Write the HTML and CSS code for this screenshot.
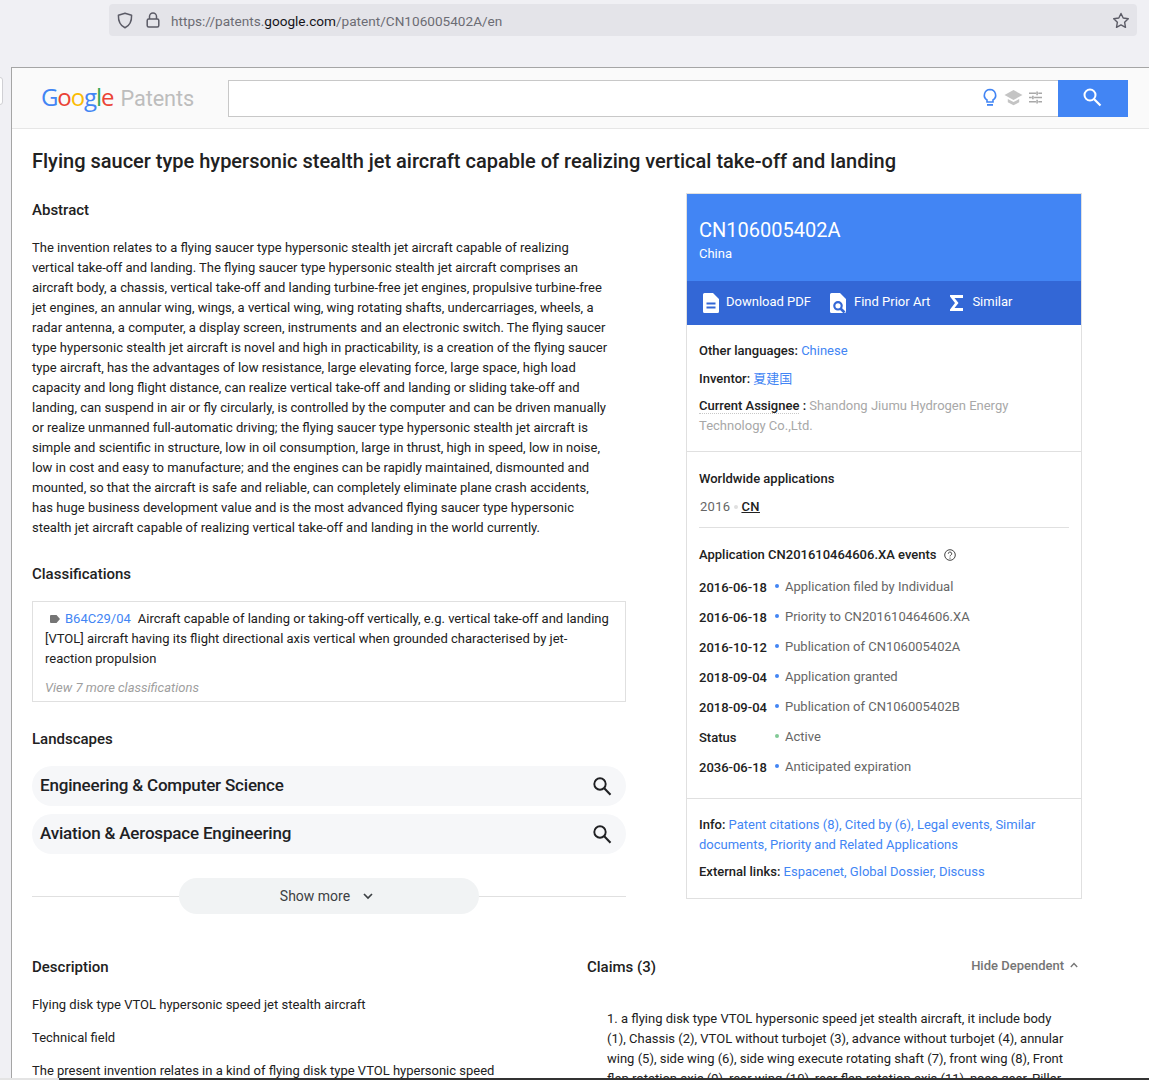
FILE: index.html
```html
<!DOCTYPE html>
<html lang="en">
<head>
<meta charset="utf-8">
<title>CN106005402A - Google Patents</title>
<link rel="stylesheet" href="styles.css">
</head>
<body>
<div class="chrome">
  <div class="urlbar">
    <svg class="ico-shield" width="16" height="17" viewBox="0 0 16 17"><path d="M8 1.200 14.600 3.200C14.800 9 13 13.400 8 15.800 3 13.400 1.200 9 1.400 3.200Z" fill="none" stroke="#5b5b66" stroke-width="1.500" stroke-linejoin="round"/></svg>
    <svg class="ico-lock" width="14" height="16" viewBox="0 0 14 16"><path d="M3.500 7V4.500a3.500 3.500 0 0 1 7 0V7" fill="none" stroke="#5b5b66" stroke-width="1.500"/><rect x="1.200" y="7" width="11.600" height="8" rx="1.500" fill="none" stroke="#5b5b66" stroke-width="1.500"/></svg>
    <span class="url">https://patents.<b>google.com</b>/patent/CN106005402A/en</span>
    <svg class="ico-star" width="18" height="17" viewBox="0 0 18 17"><path d="M9 1.500 11.200 6 16.300 6.700 12.600 10.200 13.500 15.300 9 12.900 4.500 15.300 5.400 10.200 1.700 6.700 6.800 6Z" fill="none" stroke="#5b5b66" stroke-width="1.400" stroke-linejoin="round"/></svg>
  </div>
</div>
<div class="tab-notch"></div>
<div class="frame">
  <header class="top">
    <div class="logo"><span class="g-b">G</span><span class="g-r">o</span><span class="g-y">o</span><span class="g-b">g</span><span class="g-g">l</span><span class="g-r">e</span> <span class="logo-p">Patents</span></div>
    <div class="search">
      <svg class="s-bulb" width="16" height="20" viewBox="0 0 16 20"><path d="M8 1.500a5.700 5.700 0 0 0-3 10.500v2h6v-2A5.700 5.700 0 0 0 8 1.500Z" fill="none" stroke="#4285f4" stroke-width="1.600"/><rect x="5" y="16" width="6" height="1.800" fill="#4285f4"/></svg>
      <svg class="s-cap" width="19" height="17" viewBox="0 0 19 17"><path d="M9.500 1 18.500 6 9.500 11 .5 6Z" fill="#c4c4c4"/><path d="M3.800 10v3.300l5.700 3 5.700-3V10l-5.700 3Z" fill="#c4c4c4"/></svg>
      <svg class="s-tune" width="13" height="13" viewBox="0 0 14 13"><path d="M0 2h7.500M10 2h4M0 6.500h3M5.500 6.500H14M0 11h7.500M10 11h4M8.700 0v4M4.200 4.500v4M8.700 9v4" stroke="#a8a8a8" stroke-width="1.700" fill="none"/></svg>
    </div>
    <button class="s-btn" type="button" aria-label="Search"><svg width="20" height="20" viewBox="0 0 20 20"><circle cx="8" cy="8" r="5.500" fill="none" stroke="#fff" stroke-width="2"/><path d="M12 12l6.500 6.500" stroke="#fff" stroke-width="2.200"/></svg></button>
  </header>
  <main class="page">
    <h1>Flying saucer type hypersonic stealth jet aircraft capable of realizing vertical take-off and landing</h1>
    <div class="cols">
      <section class="left">
        <h2 class="h-abs">Abstract</h2>
        <p class="abstract">The invention relates to a flying saucer type hypersonic stealth jet aircraft capable of realizing<br>vertical take-off and landing. The flying saucer type hypersonic stealth jet aircraft comprises an<br>aircraft body, a chassis, vertical take-off and landing turbine-free jet engines, propulsive turbine-free<br>jet engines, an annular wing, wings, a vertical wing, wing rotating shafts, undercarriages, wheels, a<br>radar antenna, a computer, a display screen, instruments and an electronic switch. The flying saucer<br>type hypersonic stealth jet aircraft is novel and high in practicability, is a creation of the flying saucer<br>type aircraft, has the advantages of low resistance, large elevating force, large space, high load<br>capacity and long flight distance, can realize vertical take-off and landing or sliding take-off and<br>landing, can suspend in air or fly circularly, is controlled by the computer and can be driven manually<br>or realize unmanned full-automatic driving; the flying saucer type hypersonic stealth jet aircraft is<br>simple and scientific in structure, low in oil consumption, large in thrust, high in speed, low in noise,<br>low in cost and easy to manufacture; and the engines can be rapidly maintained, dismounted and<br>mounted, so that the aircraft is safe and reliable, can completely eliminate plane crash accidents,<br>has huge business development value and is the most advanced flying saucer type hypersonic<br>stealth jet aircraft capable of realizing vertical take-off and landing in the world currently.</p>
        <h2 class="h-class">Classifications</h2>
        <div class="classbox">
          <div class="classtext"><svg class="tag" width="10" height="8" viewBox="0 0 10 8"><path d="M1 0h5.500L10 4 6.500 8H1a1 1 0 0 1-1-1V1a1 1 0 0 1 1-1Z" fill="#757575"/></svg><a class="code">B64C29/04</a>Aircraft capable of landing or taking-off vertically, e.g. vertical take-off and landing<br>[VTOL] aircraft having its flight directional axis vertical when grounded characterised by jet-<br>reaction propulsion</div>
          <div class="viewmore">View 7 more classifications</div>
        </div>
        <h2 class="h-land">Landscapes</h2>
        <div class="pill"><span>Engineering &amp; Computer Science</span><svg width="20" height="20" viewBox="0 0 20 20"><circle cx="8" cy="8" r="5.700" fill="none" stroke="#202124" stroke-width="1.900"/><path d="M12 12l6.500 6.700" stroke="#202124" stroke-width="2.100"/></svg></div>
        <div class="pill"><span>Aviation &amp; Aerospace Engineering</span><svg width="20" height="20" viewBox="0 0 20 20"><circle cx="8" cy="8" r="5.700" fill="none" stroke="#202124" stroke-width="1.900"/><path d="M12 12l6.500 6.700" stroke="#202124" stroke-width="2.100"/></svg></div>
        <div class="showrow"><div class="showmore"><span>Show more</span><svg width="10" height="7" viewBox="0 0 10 7"><path d="M1 1l4 4 4-4" fill="none" stroke="#3c4043" stroke-width="1.700"/></svg></div></div>
      </section>
      <aside class="card">
        <div class="card-head">
          <div class="pn">CN106005402A</div>
          <div class="country">China</div>
        </div>
        <div class="card-actions">
          <div class="act act1"><svg width="16" height="20" viewBox="0 0 16 20"><path d="M1.500 0H10l6 6v12.500a1.500 1.500 0 0 1-1.500 1.500h-13A1.500 1.500 0 0 1 0 18.500v-17A1.500 1.500 0 0 1 1.500 0Z" fill="#fff"/><path d="M3.500 10.500h9M3.500 14.500h9" stroke="#3367d6" stroke-width="1.800"/></svg><span>Download PDF</span></div>
          <div class="act act2"><svg width="16" height="20" viewBox="0 0 16 20"><path d="M1.500 0H10l6 6v12.500a1.500 1.500 0 0 1-1.500 1.500h-13A1.500 1.500 0 0 1 0 18.500v-17A1.500 1.500 0 0 1 1.500 0Z" fill="#fff"/><circle cx="8" cy="12.800" r="3.700" fill="none" stroke="#3367d6" stroke-width="2.200"/><path d="M10.500 15.500l4 4" stroke="#3367d6" stroke-width="2.600"/></svg><span>Find Prior Art</span></div>
          <div class="act act3"><svg width="14" height="17" viewBox="0 0 14 17"><path d="M0 0h13v3H4.500l4 5-4 5H13v3H0v-1.500L5 8 0 1.500Z" fill="#fff"/></svg><span>Similar</span></div>
        </div>
        <div class="card-sec meta">
          <div class="m1"><b>Other languages:</b> <a>Chinese</a></div>
          <div class="m2"><b>Inventor:</b> <a class="cjk">夏建国</a></div>
          <div class="m3"><b><span class="dot-u">Current Assignee</span> :</b> <span class="grey">Shandong Jiumu Hydrogen Energy Technology Co.,Ltd.</span></div>
        </div>
        <div class="card-sec apps">
          <div class="ww">Worldwide applications</div>
          <div class="wwrow"><span class="yr">2016</span><i class="bullet-g"></i><u>CN</u></div>
          <hr class="sep">
          <div class="ev-title">Application CN201610464606.XA events <svg width="12" height="12" viewBox="0 0 12 12"><circle cx="6" cy="6" r="5.300" fill="none" stroke="#444" stroke-width="1"/><path d="M4.300 4.700a1.700 1.700 0 1 1 2.500 1.500c-.6.300-.8.600-.8 1.200" fill="none" stroke="#444" stroke-width="1"/><circle cx="6" cy="9.100" r=".7" fill="#444"/></svg></div>
          <div class="ev"><b>2016-06-18</b><i class="d"></i><span>Application filed by Individual</span></div>
          <div class="ev"><b>2016-06-18</b><i class="d"></i><span>Priority to CN201610464606.XA</span></div>
          <div class="ev"><b>2016-10-12</b><i class="d"></i><span>Publication of CN106005402A</span></div>
          <div class="ev"><b>2018-09-04</b><i class="d"></i><span>Application granted</span></div>
          <div class="ev"><b>2018-09-04</b><i class="d"></i><span>Publication of CN106005402B</span></div>
          <div class="ev"><b>Status</b><i class="d dg"></i><span>Active</span></div>
          <div class="ev"><b>2036-06-18</b><i class="d"></i><span>Anticipated expiration</span></div>
        </div>
        <div class="card-sec links">
          <div class="l1"><b>Info:</b> <a>Patent citations (8),</a> <a>Cited by (6),</a> <a>Legal events,</a> <a>Similar documents,</a> <a>Priority and Related Applications</a></div>
          <div class="l2"><b>External links:</b> <a>Espacenet,</a> <a>Global Dossier,</a> <a>Discuss</a></div>
        </div>
      </aside>
    </div>
    <div class="lower">
      <section class="desc">
        <h2>Description</h2>
        <p>Flying disk type VTOL hypersonic speed jet stealth aircraft</p>
        <p>Technical field</p>
        <p>The present invention relates in a kind of flying disk type VTOL hypersonic speed</p>
      </section>
      <section class="claims">
        <div class="claims-head"><h2>Claims (3)</h2><span class="hide">Hide Dependent<svg width="8" height="6" viewBox="0 0 8 6"><path d="M.8 5 4 1.500 7.200 5" fill="none" stroke="#757575" stroke-width="1.300"/></svg></span></div>
        <p class="claim">1. a flying disk type VTOL hypersonic speed jet stealth aircraft, it include body<br>(1), Chassis (2), VTOL without turbojet (3), advance without turbojet (4), annular<br>wing (5), side wing (6), side wing execute rotating shaft (7), front wing (8), Front<br>flap rotation axis (9), rear wing (10), rear flap rotation axis (11), nose gear, Pillar</p>
      </section>
    </div>
  </main>
</div>
<div class="taskbar"></div>
</body>
</html>
```
FILE: styles.css
```css
* { box-sizing: border-box; }
html, body { margin: 0; padding: 0; height: 1080px; overflow: hidden; }
body { background: #f0f0f4; font-family: Roboto, "Liberation Sans", sans-serif; font-size: 13px; color: #212121; position: relative; }
a { color: #4285f4; text-decoration: none; }
h1, h2, p { margin: 0; }

.chrome { height: 67px; padding: 4px 12px 0 109px; }
.urlbar { height: 32px; background: #e4e4e9; border-radius: 4px; display: flex; align-items: center; padding: 0 7px 0 8px; }
.ico-shield { margin-right: 13px; }
.ico-lock { margin-right: 11px; }
.url { font-size: 13.600px; color: #6c6c74; flex: 1; padding-top: 2px; }
.url b { font-weight: 400; color: #15141a; }
.tab-notch { position: absolute; left: -6px; top: 77px; width: 9px; height: 28px; background: #fff; border: 1px solid #d0d0d4; border-radius: 3px; }

.frame { margin-left: 11px; height: 1013px; background: #fff; border-left: 1px solid #a5a5a5; border-top: 1px solid #a5a5a5; overflow: hidden; }
.top { height: 61px; background: #fafafa; border-bottom: 1px solid #e6e6e6; display: flex; align-items: flex-start; padding: 11px 0 0 29px; }
.logo { width: 187px; font-family: "Open Sans", Roboto, sans-serif; font-size: 24px; line-height: 36px; letter-spacing: -1.100px; color: #bdbdbd; }
.logo-p { font-family: Roboto, sans-serif; font-size: 21.700px; letter-spacing: -.1px; margin-left: 2px; }
.g-b { color: #4285f4; } .g-r { color: #ea4335; } .g-y { color: #fbbc05; } .g-g { color: #34a853; }
.search { width: 830px; height: 37px; margin-top: 1px; background: #fff; border: 1px solid #c8c8c8; border-right: 0; display: flex; align-items: center; justify-content: flex-end; padding: 0 16px 2px 0; }
.s-bulb { margin-right: 6px; }
.s-cap { margin-right: 6px; }
.s-btn { width: 70px; height: 37px; margin-top: 1px; border: 0; padding: 0 2px 3px 0; background: #4285f4; display: flex; align-items: center; justify-content: center; }

.page { padding: 20px 0 0 20px; }
h1 { font-size: 20px; line-height: 24px; font-weight: 500; color: #212121; }
h2 { font-size: 15px; line-height: 20px; font-weight: 500; color: #212121; }
.cols { display: flex; align-items: flex-start; margin-top: 20px; }
.left { width: 594px; margin-right: 60px; padding-top: 7px; }
.h-abs { margin-bottom: 18px; }
.abstract { line-height: 20px; color: #212121; }
.h-class { margin-top: 26px; margin-bottom: 17px; }
.classbox { border: 1px solid #e0e0e0; height: 101px; padding: 7px 12px 0; }
.classtext { line-height: 20px; }
.tag { margin: 0 5px 0 5px; }
.code { margin-right: 7px; font-weight: 400; }
.viewmore { margin-top: 9px; font-style: italic; line-height: 20px; color: #9e9e9e; }
.h-land { margin-top: 27px; margin-bottom: 17px; }
.pill { height: 40px; border-radius: 20px; background: #f6f7f9; display: flex; align-items: center; justify-content: space-between; padding: 0 14px 0 8px; margin-bottom: 8px; }
.pill span { font-size: 17px; font-weight: 500; letter-spacing: -.18px; color: #202124; margin-top: -2px; }
.showrow { position: relative; height: 36px; margin-top: 24px; display: flex; justify-content: center; background: linear-gradient(#e0e0e0, #e0e0e0) 0 18px / 100% 1px no-repeat; }
.showmore { width: 300px; height: 36px; border-radius: 18px; padding-right: 5px; background: #f1f3f4; display: flex; align-items: center; justify-content: center; gap: 13px; font-size: 14px; color: #3c4043; }

.card { width: 396px; height: 706px; border: 1px solid #e0e0e0; }
.card-head { height: 87px; background: #4285f4; color: #fff; padding: 23px 12px 0; }
.pn { font-size: 20px; line-height: 26px; color: #fff; }
.country { line-height: 20px; margin-top: 1px; }
.card-actions { height: 44px; background: #3367d6; color: #fff; display: flex; align-items: center; padding-left: 16px; }
.act { display: flex; align-items: center; }
.act span { margin-top: -4px; }
.act1 { margin-right: 19px; }
.act1 svg { margin-right: 7px; }
.act2 { margin-right: 20px; }
.act2 svg { margin-right: 8px; }
.act3 svg { margin-right: 8px; }
.card-sec { padding: 0 12px; }
.card-sec b { font-weight: 500; color: #212121; }
.meta { height: 127px; border-bottom: 1px solid #e0e0e0; padding-top: 16px; line-height: 20px; }
.m1 { margin-bottom: 7px; }
.m2 { margin-bottom: 7px; }
.cjk { font-family: "Noto Sans CJK SC", sans-serif; }
.dot-u { border-bottom: 1px dotted #c8c8c8; }
.grey { color: #a8a8a8; }
.apps { height: 347px; border-bottom: 1px solid #e0e0e0; padding-top: 17px; }
.ww { font-weight: 500; line-height: 20px; }
.wwrow { margin-top: 8px; line-height: 20px; display: flex; align-items: center; padding-left: 1px; font-weight: 500; }
.yr { font-weight: 400; color: #666; letter-spacing: .3px; }
.bullet-g { width: 4px; height: 4px; border-radius: 50%; background: #e0e0e0; margin: 0 3px 0 4px; }
.wwrow u { color: #212121; letter-spacing: .4px; }
.sep { border: 0; border-top: 1px solid #e0e0e0; margin: 10px 0 17px; }
.ev-title { font-weight: 500; line-height: 20px; display: flex; align-items: center; gap: 7px; margin-bottom: 6px; }
.ev { height: 30px; display: flex; align-items: center; }
.ev b { width: 68px; margin-right: 8px; padding-top: 2px; flex: none; }
.d { width: 4px; height: 4px; border-radius: 50%; background: #4285f4; margin-right: 6px; margin-top: -1px; }
.dg { background: #81c995; }
.ev span { color: #666; }
.links { padding-top: 16px; line-height: 20px; }
.l1 { margin-bottom: 7px; }

.lower { display: flex; margin-top: 43px; }
.desc { width: 555px; }
.desc h2 { margin-bottom: 18px; }
.desc p { line-height: 20px; margin-bottom: 13px; }
.claims { width: 493px; }
.claims-head { display: flex; justify-content: space-between; align-items: center; height: 20px; padding-right: 2px; }
.hide { font-weight: 500; color: #757575; display: inline-flex; align-items: center; gap: 6px; margin-top: -4px; }
.claim { margin: 32px 18px 0 20px; line-height: 20px; width: 470px; }
.taskbar { position: absolute; left: 0; right: 0; bottom: 0; height: 2px; background: linear-gradient(to right, #e4e4e4 59px, #333 59px); }
```
